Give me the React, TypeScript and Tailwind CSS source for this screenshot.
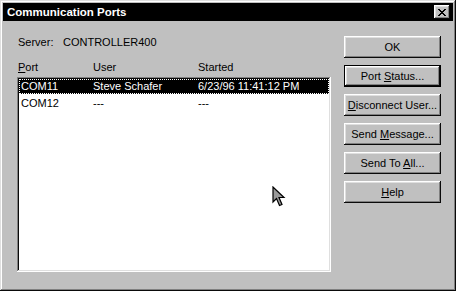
import React from "react";

const font = { fontFamily: '"Liberation Sans", Arial, sans-serif' };

function Btn({ children, isDefault }: { children: React.ReactNode; isDefault?: boolean }) {
  if (isDefault) {
    return (
      <div className="h-[22px] w-[97px] border border-black">
        <div className="h-full w-full flex items-center justify-center text-[11px] leading-[13px] text-black shadow-[inset_-1px_-1px_#0a0a0a,inset_1px_1px_#ffffff,inset_-2px_-2px_#808080,inset_2px_2px_#dfdfdf]">
          <span>{children}</span>
        </div>
      </div>
    );
  }
  return (
    <div className="h-[22px] w-[97px] flex items-center justify-center text-[11px] leading-[13px] text-black shadow-[inset_-1px_-1px_#0a0a0a,inset_1px_1px_#ffffff,inset_-2px_-2px_#808080,inset_2px_2px_#dfdfdf]">
      <span>{children}</span>
    </div>
  );
}

const U = ({ children }: { children: React.ReactNode }) => (
  <span className="underline underline-offset-[1px] decoration-1">{children}</span>
);

export default function App() {
  return (
    <div style={font} className="w-[456px] h-[291px] bg-[#c0c0c0] p-[3px] shadow-[inset_-1px_-1px_#0a0a0a,inset_1px_1px_#dfdfdf,inset_-2px_-2px_#808080,inset_2px_2px_#ffffff] flex flex-col">
      {/* Title bar */}
      <div className="h-[18px] bg-black flex items-center justify-between pl-[4px] pr-[3px]">
        <span className="text-white font-bold text-[11.5px] leading-[14px]">Communication Ports</span>
        <div className="w-[16px] h-[14px] bg-[#c0c0c0] flex items-center justify-center shadow-[inset_-1px_-1px_#0a0a0a,inset_1px_1px_#ffffff,inset_-2px_-2px_#808080,inset_2px_2px_#dfdfdf]">
          <svg width="8" height="7" viewBox="0 0 8 7" shapeRendering="crispEdges">
            <path d="M0 0h2v1h-2zM6 0h2v1h-2zM1 1h2v1h-2zM5 1h2v1h-2zM2 2h4v1h-4zM3 3h2v1h-2zM2 4h4v1h-4zM1 5h2v1h-2zM5 5h2v1h-2zM0 6h2v1h-2zM6 6h2v1h-2z" fill="#000" />
          </svg>
        </div>
      </div>

      {/* Body */}
      <div className="flex flex-1 pl-[14px] pt-[15px] gap-[13px]">
        {/* Left column */}
        <div className="w-[314px] flex flex-col">
          <div className="flex h-[13px] leading-[13px] text-[11px] text-black pl-[1px]">
            <span className="w-[45px]">Server:</span>
            <span>CONTROLLER400</span>
          </div>
          <div className="flex h-[13px] leading-[13px] text-[11px] text-black pl-[1px] mt-[12px]">
            <span className="w-[75px]"><U>P</U>ort</span>
            <span className="w-[105px]">User</span>
            <span>Started</span>
          </div>
          <div className="relative mt-[3px] h-[195px] bg-white p-[2px] shadow-[inset_-1px_-1px_#ffffff,inset_1px_1px_#808080,inset_-2px_-2px_#dfdfdf,inset_2px_2px_#0a0a0a]">
            <div className="h-[15px] bg-black border border-dotted border-white flex items-center text-[11px] leading-[13px] text-white pl-[1px]">
              <span className="w-[72px]">COM11</span>
              <span className="w-[105px]">Steve Schafer</span>
              <span>6/23/96 11:41:12 PM</span>
            </div>
            <div className="h-[16px] mt-[1px] flex items-center text-[11px] leading-[13px] text-black pl-[2px]">
              <span className="w-[72px]">COM12</span>
              <span className="w-[105px]">---</span>
              <span>---</span>
            </div>
            <svg className="absolute left-[255px] top-[109px]" width="14" height="22" viewBox="0 0 14 22">
              <path d="M1 1 L1 16 L4.5 12.5 L7.5 19.5 L10 18.5 L7 11.5 L12 11.5 Z" fill="#9a9a9a" stroke="#000" strokeWidth="1.2" strokeLinejoin="miter" />
            </svg>
          </div>
        </div>

        {/* Buttons */}
        <div className="flex flex-col gap-[7px]">
          <Btn>OK</Btn>
          <Btn isDefault>Port <U>S</U>tatus...</Btn>
          <Btn><U>D</U>isconnect User...</Btn>
          <Btn>Send <U>M</U>essage...</Btn>
          <Btn>Send To <U>A</U>ll...</Btn>
          <Btn><U>H</U>elp</Btn>
        </div>
      </div>
    </div>
  );
}
